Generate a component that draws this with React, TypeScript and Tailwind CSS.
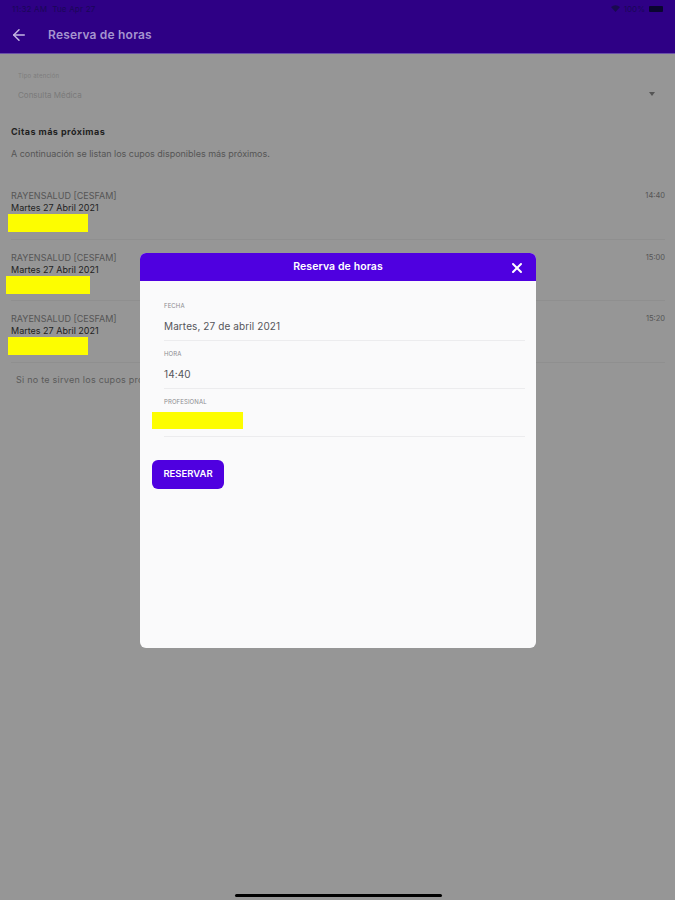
import { ArrowLeft, X } from "lucide-react"

const SLOTS = [
  { time: "14:40", mark: "ml-[-3px] w-[80px]" },
  { time: "15:00", mark: "ml-[-5px] w-[84px]" },
  { time: "15:20", mark: "ml-[-3px] w-[80px]" },
]

function ModalField({ label, value }: { label: string; value?: string }) {
  return (
    <div className="h-[48px] border-b border-[#ececee] mr-[11px]">
      <p className="pt-[9px] text-[6px] leading-[8px] tracking-[0.1px] text-[#8b8b8f]">{label}</p>
      {value ? (
        <p className="mt-[9px] text-[10px] leading-[14px] tracking-[0.1px] text-[#55555a]">{value}</p>
      ) : (
        <div className="mt-[6px] ml-[-12px] h-[17px] w-[91px] bg-[#fdfd00]" />
      )}
    </div>
  )
}

export default function App() {
  return (
    <div className="relative h-[900px] w-[675px] overflow-hidden bg-[#969696] font-['Inter','Liberation_Sans',sans-serif]">
      {/* barra superior */}
      <header className="h-[54px] border-b border-[#6a50a8] bg-[#2e0085]">
        <div className="flex h-[16px] items-center justify-between pl-[12px] pr-[12px] pt-[1px]">
          <span className="whitespace-pre text-[8px] tracking-[0.2px] text-[#1a0758]">11:32 AM  Tue Apr 27</span>
          <div className="flex items-center gap-[4px]">
            <svg width="9" height="7" viewBox="0 0 9 7" fill="#1a0a50">
              <path d="M0 2 Q4.5 -1.5 9 2 L4.5 7 Z" />
            </svg>
            <span className="text-[8px] text-[#1a0758]">100%</span>
            <div className="h-[6px] w-[14px] rounded-[1px] bg-[#0a0530]" />
          </div>
        </div>
        <div className="flex h-[37px] items-center">
          <ArrowLeft className="ml-[10px] h-[18px] w-[18px] text-[#c4b6e2]" strokeWidth={2} />
          <h1 className="ml-[20px] text-[12px] font-semibold tracking-[0.2px] text-[#a594cf]">Reserva de horas</h1>
        </div>
      </header>

      {/* selector */}
      <div className="flex items-center justify-between pl-[18px] pr-[20px] pt-[18px]">
        <div>
          <p className="text-[6px] leading-[8px] tracking-[0.2px] text-[#7d7d7d]">Tipo atención</p>
          <p className="mt-[9px] text-[8px] leading-[12px] text-[#7a7a7a]">Consulta Médica</p>
        </div>
        <div className="mt-[15px] h-0 w-0 border-x-[3px] border-t-[4px] border-x-transparent border-t-[#555555]" />
      </div>

      {/* lista de cupos */}
      <section className="pl-[11px] pr-[10px] pt-[25px]">
        <h2 className="text-[9px] font-bold leading-[12px] tracking-[0.45px] text-[#1f1f1f]">Citas más próximas</h2>
        <p className="mt-[10px] text-[9px] leading-[12px] tracking-[-0.02px] text-[#555555]">
          A continuación se listan los cupos disponibles más próximos.
        </p>
        <div className="mt-[18px]">
          {SLOTS.map(slot => (
            <div key={slot.time} className="flex h-[61.5px] items-start justify-between border-b border-[#8f8f8f] pt-[11px]">
              <div>
                <p className="text-[9px] leading-[13px] text-[#555555]">RAYENSALUD [CESFAM]</p>
                <p className="text-[9px] leading-[12px] text-[#222222]">Martes 27 Abril 2021</p>
                <div className={`h-[18px] bg-[#fdfd00] ${slot.mark}`} />
              </div>
              <span className="text-[7.5px] leading-[13px] text-[#555555]">{slot.time}</span>
            </div>
          ))}
        </div>
        <p className="pl-[5px] pt-[11px] text-[9px] leading-[12px] tracking-[0.25px] text-[#5a5a5a]">
          Si no te sirven los cupos propuestos, puedes buscar más horas
        </p>
      </section>

      {/* modal */}
      <div className="absolute left-[140px] top-[253px] h-[395px] w-[396px] overflow-hidden rounded-[6px] bg-[#fafafb]">
        <div className="relative flex h-[28px] items-center justify-center bg-[#4f00e0]">
          <span className="text-[10.5px] font-semibold tracking-[0.1px] text-white">Reserva de horas</span>
          <X className="absolute right-[11px] top-[7px] h-[16px] w-[16px] text-white" strokeWidth={3} />
        </div>
        <div className="pl-[24px] pt-[12px]">
          <ModalField label="FECHA" value="Martes, 27 de abril 2021" />
          <ModalField label="HORA" value="14:40" />
          <ModalField label="PROFESIONAL" />
        </div>
        <button className="ml-[12px] mt-[23px] h-[29px] w-[72px] rounded-[6px] bg-[#4f00e0] text-[9.5px] font-semibold text-white">
          RESERVAR
        </button>
      </div>

      {/* indicador inicio */}
      <div className="absolute bottom-[3px] left-[235px] h-[3px] w-[207px] rounded-full bg-black" />
    </div>
  )
}
